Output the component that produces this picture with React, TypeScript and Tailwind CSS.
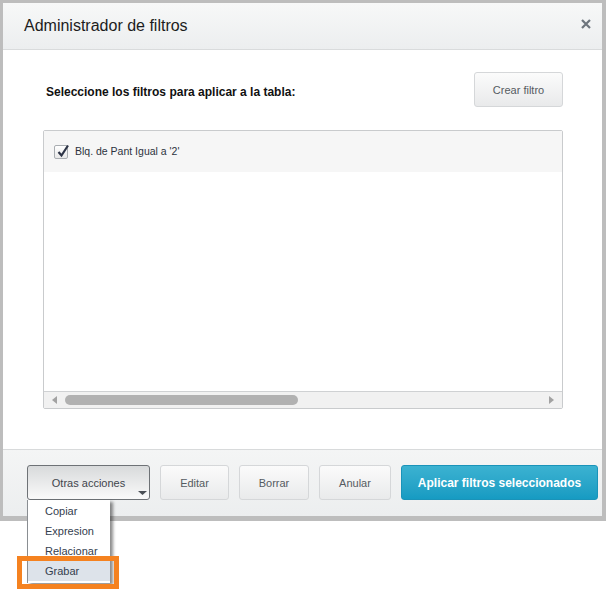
import React from "react";

const FONT = { fontFamily: '"Liberation Sans", Arial, sans-serif' };

function GrayButton({ label, w }: { label: string; w: string }) {
  return (
    <button
      className={`${w} h-[35px] pt-[2px] rounded-[3px] border border-[#d5d7d9] bg-gradient-to-b from-[#fbfbfb] to-[#e9eaeb] text-[11px] text-[#555b61]`}
    >
      {label}
    </button>
  );
}

export default function App() {
  const menu = ["Copiar", "Expresion", "Relacionar", "Grabar"];

  return (
    <div className="relative w-[606px] h-[591px] bg-white" style={FONT}>
      <div className="border-l-[3px] border-t-[3px] border-r-[4px] border-b-[5px] border-[#bdbdbd]">
        {/* header */}
        <div className="h-[47px] flex items-center justify-between pl-[21px] pr-[11px] border-b border-[#d9dbdc] bg-gradient-to-b from-[#f7f8f8] to-[#eceeef]">
          <h1 className="text-[16px] text-[#1c1c1c]">Administrador de filtros</h1>
          <svg width="10" height="10" viewBox="0 0 10 10" className="-mt-[4px]">
            <path d="M1 1 L9 9 M9 1 L1 9" stroke="#6d757d" strokeWidth="2.2" />
          </svg>
        </div>

        {/* body */}
        <div className="h-[399px] pt-[22px] pl-[40px] pr-[39px]">
          <div className="flex items-center justify-between h-[35px]">
            <p className="pl-[3px] pt-[4px] text-[12px] font-bold text-[#111]">
              Seleccione los filtros para aplicar a la tabla:
            </p>
            <GrayButton label="Crear filtro" w="w-[89px]" />
          </div>

          <div className="mt-[23px] h-[279px] flex flex-col rounded-[2px] border border-[#c9cbcd]">
            <div className="h-[41px] flex items-center gap-[7px] pl-[10px] bg-[#f6f6f6]">
              <span className="relative w-[14px] h-[14px] rounded-[2px] border border-[#a9adb1] bg-gradient-to-b from-white to-[#e8e8e8]">
                <svg width="14" height="14" viewBox="0 0 14 14" className="absolute left-[1px] -top-[2px]">
                  <path d="M2.5 8 L5.5 11.5 L12 1.5" stroke="#2d3446" strokeWidth="2.2" fill="none" />
                </svg>
              </span>
              <span className="text-[10.5px] text-[#2c3340]">Blq. de Pant Igual a '2'</span>
            </div>
            <div className="flex-1" />
            <div className="h-[17px] flex items-center border-t border-[#cfd1d3] bg-[#f1f1f1] px-[8px]">
              <svg width="5" height="8" viewBox="0 0 5 8">
                <path d="M5 0 L0 4 L5 8 Z" fill="#a2a2a2" />
              </svg>
              <div className="ml-[8px] w-[233px] h-[10px] rounded-full bg-[#b1b1b1]" />
              <div className="flex-1" />
              <svg width="5" height="8" viewBox="0 0 5 8">
                <path d="M0 0 L5 4 L0 8 Z" fill="#a2a2a2" />
              </svg>
            </div>
          </div>
        </div>

        {/* footer */}
        <div className="h-[67px] border-t border-[#d8dadb] bg-gradient-to-b from-[#f4f5f5] to-[#eceeef] flex items-start pt-[15px] pl-[24px] gap-[10px]">
          <button className="relative w-[123px] h-[35px] pt-[2px] rounded-[3px] border border-[#6e7276] bg-gradient-to-b from-[#d8dadb] to-[#fafafa] text-[11px] text-[#3f454c]">
            Otras acciones
            <svg width="9" height="4" viewBox="0 0 9 4" className="absolute right-[2px] bottom-[4px]">
              <path d="M0 0 L9 0 L4.5 4 Z" fill="#4a4f55" />
            </svg>
          </button>
          <GrayButton label="Editar" w="w-[69px]" />
          <GrayButton label="Borrar" w="w-[70px]" />
          <GrayButton label="Anular" w="w-[72px]" />
          <button className="w-[197px] h-[35px] pt-[1px] rounded-[3px] border border-[#1a93b9] bg-gradient-to-b from-[#3bb2d1] to-[#169bc2] text-[12px] font-bold text-white">
            Aplicar filtros seleccionados
          </button>
        </div>
      </div>

      {/* dropdown */}
      <div className="absolute left-[27px] top-[500px] w-[83px] pt-[1px] pb-[2px] bg-white border-l border-[#8a8e92] shadow-[3px_2px_3px_rgba(0,0,0,0.45)]">
        {menu.map((m) => (
          <div
            key={m}
            className={`h-[20px] flex items-center pl-[17px] text-[11px] text-[#34404e] ${m === "Grabar" ? "bg-[#dde3ea]" : ""}`}
          >
            {m}
          </div>
        ))}
      </div>

      {/* highlight */}
      <div className="absolute left-[17px] top-[556px] w-[102px] h-[33px] border-[5px] border-[#f58220]" />
    </div>
  );
}
